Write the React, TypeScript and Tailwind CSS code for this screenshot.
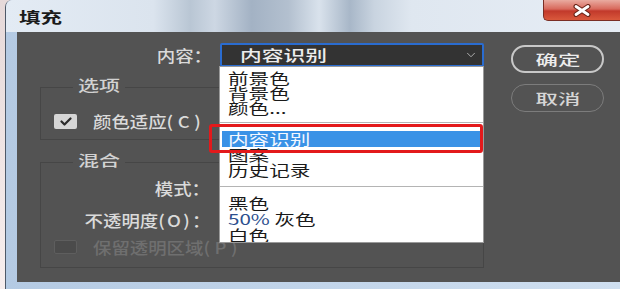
import { ChevronDown } from 'lucide-react';

function Check() {
  return (
    <svg width="12" height="9" viewBox="0 0 12 9" fill="none">
      <polyline points="1.5,4.5 4.5,7.5 10.5,1.5" stroke="#2a2a2a" strokeWidth="2.2" strokeLinecap="round" strokeLinejoin="round" />
    </svg>
  );
}

function CloseX() {
  return (
    <svg width="20" height="13" viewBox="0 0 20 13" fill="none">
      <path d="M4 2.5 L16 10.5 M16 2.5 L4 10.5" stroke="#6a2418" strokeWidth="5" strokeLinecap="round" />
      <path d="M4 2.5 L16 10.5 M16 2.5 L4 10.5" stroke="#ffffff" strokeWidth="2.8" strokeLinecap="round" />
    </svg>
  );
}

export default function App() {
  return (
    <div className="w-[620px] h-[289px] overflow-hidden flex pl-[5px] bg-[linear-gradient(180deg,#e6d9d9,#f7eeee)] font-['Noto_Sans_CJK_SC','Noto_Sans',sans-serif]">
      <div className="flex-1 min-w-0 flex flex-col border-l border-[#4e5968] rounded-tl-[7px] overflow-hidden bg-[linear-gradient(90deg,#b4cae3,#cfdff0)]">
        {/* title bar */}
        <div className="h-[32px] shrink-0 flex items-start justify-between bg-[linear-gradient(90deg,#e3ebf4_0%,#dbe4ee_24%,#b9c6d4_30%,#cdd7e3_34%,#a3b2c4_40%,#b3c0cf_46%,#d9e2ec_51%,#a8b7c8_56%,#c9d4e0_60%,#dfe7f0_66%,#e6edf5_100%)]">
          <span className="mt-[8px] ml-[13px] inline-block origin-left scale-x-[1.48] text-[14.5px] leading-[17px] font-bold text-[#1b1b1b]">填充</span>
          <div className="w-[77px] h-[21px] flex items-center justify-center rounded-bl-[5px] border-l border-b border-[#7a2e25] bg-[linear-gradient(180deg,#e9aba0_0%,#d8695c_45%,#c2392b_55%,#d9593c_100%)]">
            <CloseX />
          </div>
        </div>
        {/* body with frame */}
        <div className="flex-1 flex pl-[11px] pb-[7px]">
          <div className="flex-1 flex bg-[#535353] pt-[11px]">
            {/* left column */}
            <div className="w-[467px] shrink-0 flex flex-col">
              <div className="h-[24px] flex items-center">
                <div className="w-[195px] text-right text-[16px] leading-[20px] font-medium text-[#dadada]">
                  <span className="inline-block origin-right scale-x-[1.15]">内容：</span>
                </div>
                <div className="relative ml-[8px] w-[264px] h-[24px]">
                  <div className="h-full flex items-center justify-between border-2 border-[#2a6cd0] bg-[#333333] rounded-[2px] pl-[18px] pr-[4px]">
                    <span className="inline-block origin-left scale-x-[1.45] text-[15px] leading-[18px] font-medium text-[#ececec]">内容识别</span>
                    <ChevronDown size={14} strokeWidth={1.5} color="#bdbdbd" />
                  </div>
                  {/* dropdown list */}
                  <div className="absolute left-[-1px] top-[23px] w-[265px] h-[177px] bg-white border border-[#9a9a9a] overflow-hidden pt-[3px] text-[14.5px] text-[#1a1a1a] z-10">
                    <div className="h-[15px] leading-[15px] pl-[8px]"><span className="inline-block origin-left scale-x-[1.42]">前景色</span></div>
                    <div className="h-[15px] leading-[15px] pl-[8px]"><span className="inline-block origin-left scale-x-[1.42]">背景色</span></div>
                    <div className="h-[15px] leading-[15px] pl-[8px]"><span className="inline-block origin-left scale-x-[1.42]">颜色...</span></div>
                    <div className="mt-[7px] mb-[8px] h-px bg-[#b4b4b4]" />
                    <div className="mx-[2px] h-[16px] leading-[16px] pl-[6px] bg-[#3a92e6] text-[#f4f8ff]"><span className="inline-block origin-left scale-x-[1.42]">内容识别</span></div>
                    <div className="h-[15px] leading-[15px] pl-[8px]"><span className="inline-block origin-left scale-x-[1.42]">图案</span></div>
                    <div className="h-[16px] leading-[16px] pl-[8px]"><span className="inline-block origin-left scale-x-[1.42]">历史记录</span></div>
                    <div className="mt-[8px] mb-[8px] h-px bg-[#b4b4b4]" />
                    <div className="h-[16px] leading-[16px] pl-[8px]"><span className="inline-block origin-left scale-x-[1.42]">黑色</span></div>
                    <div className="h-[16px] leading-[16px] pl-[8px]"><span className="inline-block origin-left scale-x-[1.42]"><span className="text-[#2d4f8e]">50%</span> 灰色</span></div>
                    <div className="h-[16px] leading-[16px] pl-[8px]"><span className="inline-block origin-left scale-x-[1.42]">白色</span></div>
                  </div>
                  {/* red annotation box */}
                  <div className="absolute left-[-11px] top-[81px] w-[274px] h-[29px] border-[3px] border-[#e3191b] rounded-[3px] z-20" />
                </div>
              </div>

              {/* 选项 group */}
              <fieldset className="mt-[8px] ml-[23px] w-[444px] border border-[#464646]">
                <legend className="ml-[32px] px-[5px] h-[24px] text-[15px] leading-[20px] font-medium text-[#d2d2d2]">
                  <span className="inline-block w-[42px]"><span className="inline-block origin-left scale-x-[1.4]">选项</span></span>
                </legend>
                <div className="pt-[12px] pb-[8px] pl-[13px]">
                  <div className="h-[20px] flex items-center">
                    <div className="w-[23px] h-[15px] bg-[#d6d6d6] rounded-[2px] flex items-center justify-center">
                      <Check />
                    </div>
                    <span className="ml-[16px] inline-block origin-left scale-x-[1.15] text-[16px] leading-[20px] font-medium text-[#dadada] whitespace-nowrap">
                      颜色适应<span className="tracking-[4px]">(C)</span>
                    </span>
                  </div>
                </div>
              </fieldset>

              {/* 混合 group */}
              <fieldset className="mt-[10px] ml-[23px] w-[444px] border border-[#464646]">
                <legend className="ml-[32px] px-[5px] h-[24px] text-[15px] leading-[20px] font-medium text-[#d2d2d2]">
                  <span className="inline-block w-[42px]"><span className="inline-block origin-left scale-x-[1.4]">混合</span></span>
                </legend>
                <div className="pt-[1px] pb-[7px] flex flex-col">
                  <div className="h-[26px] flex items-center">
                    <div className="w-[169px] text-right text-[16px] leading-[20px] font-medium text-[#dadada]">
                      <span className="inline-block origin-right scale-x-[1.15]">模式：</span>
                    </div>
                  </div>
                  <div className="mt-[6px] h-[26px] flex items-center">
                    <div className="w-[169px] text-right text-[16px] leading-[20px] font-medium text-[#dadada] whitespace-nowrap">
                      <span className="inline-block origin-right scale-x-[1.15]">不透明度<span className="tracking-[2px]">(O)</span>：</span>
                    </div>
                  </div>
                  <div className="mt-[1px] h-[26px] flex items-center pl-[13px]">
                    <div className="w-[23px] h-[14px] bg-[#4b4b4b] border border-[#5e5e5e] rounded-[2px]" />
                    <span className="ml-[16px] inline-block origin-left scale-x-[1.15] text-[16px] leading-[20px] font-medium text-[#6f6f6f] whitespace-nowrap">
                      保留透明区域<span className="tracking-[4px]">(P)</span>
                    </span>
                  </div>
                </div>
              </fieldset>
            </div>

            {/* right column: buttons */}
            <div className="ml-[27px] pt-[2px] flex flex-col gap-[11px]">
              <button className="w-[93px] h-[28px] rounded-full border-2 border-[#c8c8c8] text-[14px] leading-[18px] font-medium text-[#ececec] flex items-center justify-center">
                <span className="inline-block scale-x-[1.6]">确定</span>
              </button>
              <button className="w-[93px] h-[28px] rounded-full border border-[#7c7c7c] text-[14px] leading-[18px] font-medium text-[#d6d6d6] flex items-center justify-center">
                <span className="inline-block scale-x-[1.6]">取消</span>
              </button>
            </div>
          </div>
        </div>
      </div>
    </div>
  );
}
